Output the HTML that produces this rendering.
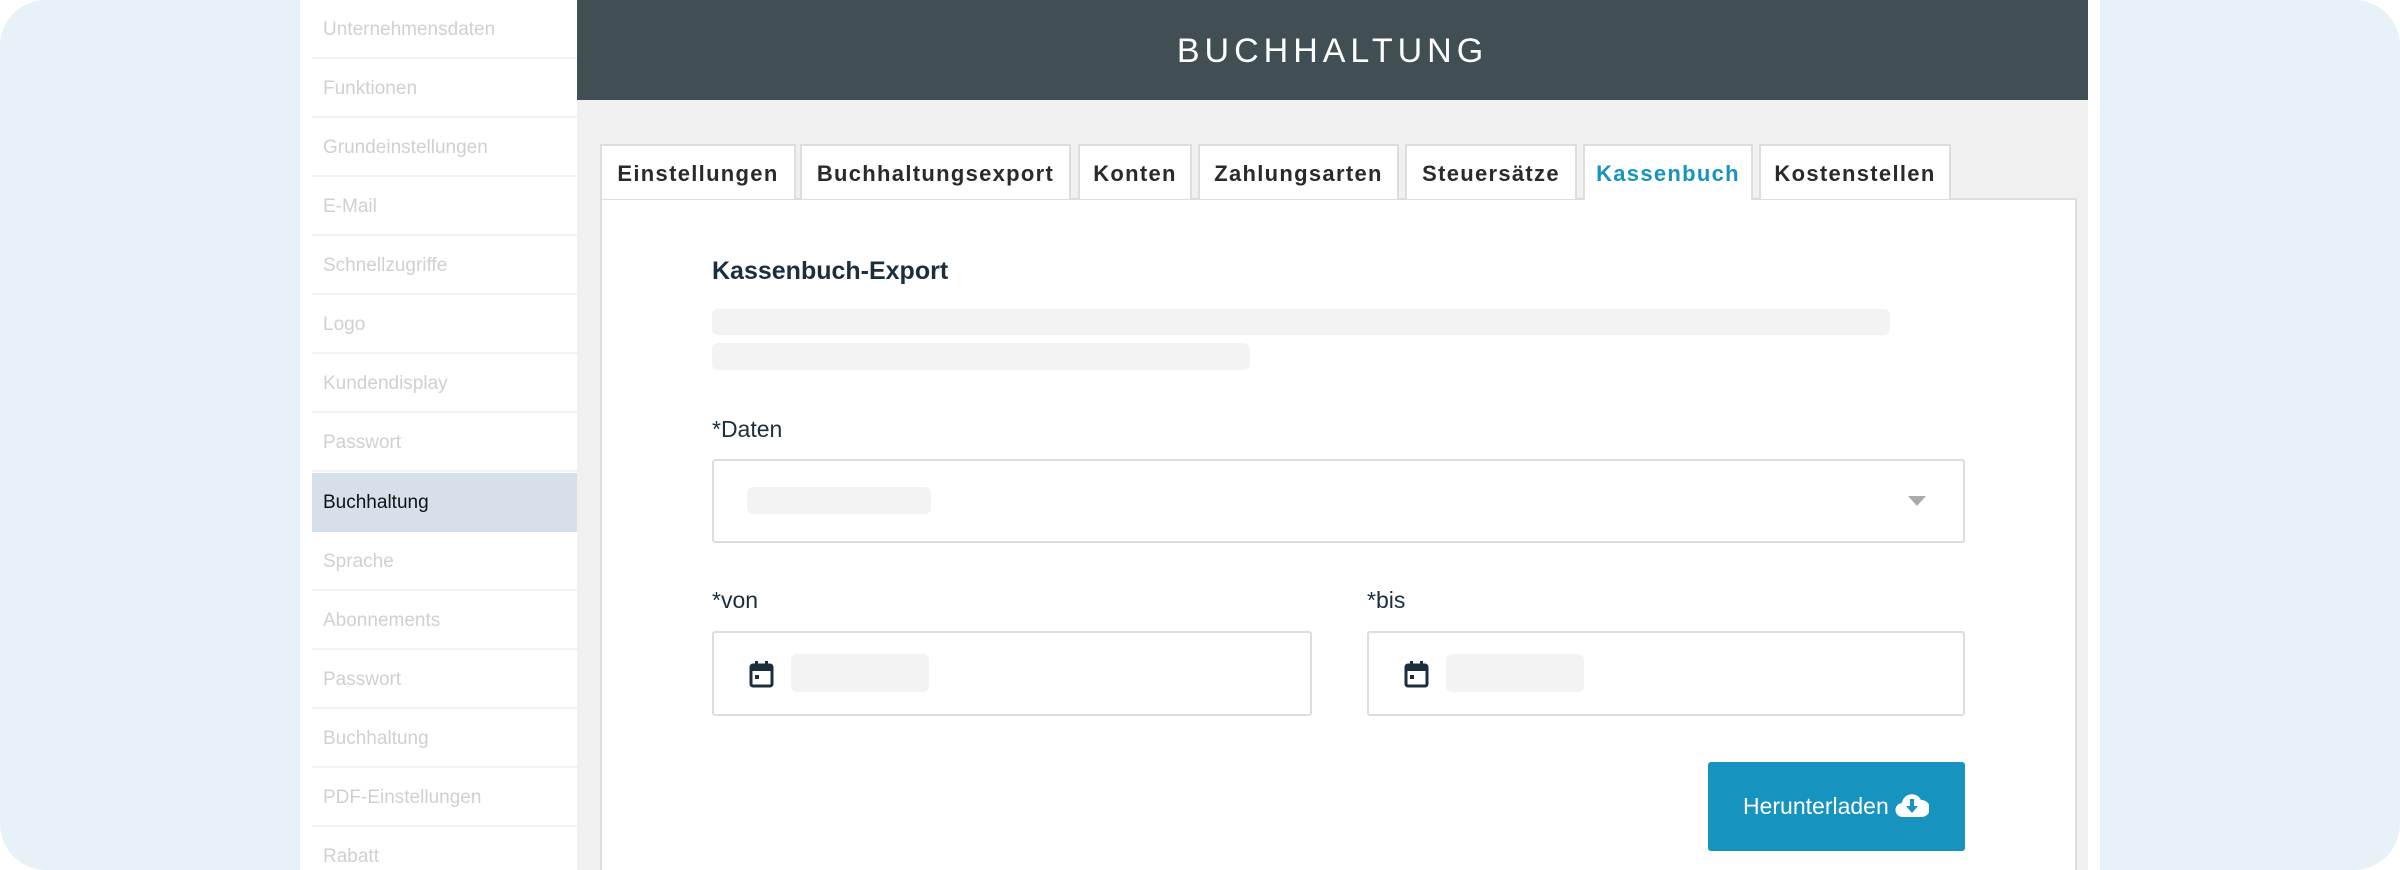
<!DOCTYPE html>
<html><head><meta charset="utf-8"><style>
*{margin:0;padding:0;box-sizing:border-box}
html,body{width:2400px;height:870px;overflow:hidden}
body{background:#fff;font-family:"Liberation Sans","DejaVu Sans",sans-serif;position:relative}
.bg{position:absolute;left:0;top:0;width:2400px;height:870px;background:#e6f2f8;border-radius:46px}
.card{position:absolute;left:300px;top:0;width:1800px;height:870px;background:#fff}
.side{position:absolute;left:312px;top:0;width:265px;height:870px;overflow:hidden}
.it{position:absolute;left:0;width:265px;height:59px;border-bottom:2px solid #f2f2f2;color:#d0d0d0;font-size:19px;line-height:59px;padding-left:11px}
.it.sel{background:#d6e0ea;color:#111;border-bottom-color:#d6e0ea}
.head{position:absolute;left:577px;top:0;width:1511px;height:100px;background:#414f55;color:#fff;font-size:34px;letter-spacing:5px;text-align:center;line-height:102px}
.gray{position:absolute;left:577px;top:100px;width:1511px;height:770px;background:#f0f0f0}
.tab{position:absolute;top:144px;height:55px;background:#fff;border:2px solid #ddd;border-bottom:none;font-weight:bold;font-size:22px;letter-spacing:1.3px;color:#2a2a2a;text-align:center;line-height:56px}
.panel{position:absolute;left:600px;top:198px;width:1477px;height:700px;background:#fff;border:2px solid #ddd}
.ph{position:absolute;background:#f3f3f3;border-radius:6px}
.lbl{position:absolute;font-size:23px;color:#1a2e3e}
.box{position:absolute;border:2px solid #ddd;border-radius:3px;background:#fff}
</style></head><body>
<div class="bg"></div>
<div class="card"></div>
<div class="side">
<div class="it" style="top:0">Unternehmensdaten</div>
<div class="it" style="top:59px">Funktionen</div>
<div class="it" style="top:118px">Grundeinstellungen</div>
<div class="it" style="top:177px">E-Mail</div>
<div class="it" style="top:236px">Schnellzugriffe</div>
<div class="it" style="top:295px">Logo</div>
<div class="it" style="top:354px">Kundendisplay</div>
<div class="it" style="top:413px">Passwort</div>
<div class="it sel" style="top:473px">Buchhaltung</div>
<div class="it" style="top:532px">Sprache</div>
<div class="it" style="top:591px">Abonnements</div>
<div class="it" style="top:650px">Passwort</div>
<div class="it" style="top:709px">Buchhaltung</div>
<div class="it" style="top:768px">PDF-Einstellungen</div>
<div class="it" style="top:827px">Rabatt</div>
</div>
<div class="head">BUCHHALTUNG</div>
<div class="gray"></div>
<div class="panel"></div>
<div class="tab" style="left:600px;width:196px">Einstellungen</div>
<div class="tab" style="left:800px;width:271px">Buchhaltungsexport</div>
<div class="tab" style="left:1078px;width:114px">Konten</div>
<div class="tab" style="left:1198px;width:201px">Zahlungsarten</div>
<div class="tab" style="left:1405px;width:172px">Steuersätze</div>
<div class="tab" style="left:1583px;width:170px;color:#1693bf;height:56px">Kassenbuch</div>
<div class="tab" style="left:1759px;width:192px">Kostenstellen</div>
<div class="lbl" style="left:712px;top:257px;font-size:25px;font-weight:bold">Kassenbuch-Export</div>
<div class="ph" style="left:712px;top:309px;width:1178px;height:26px"></div>
<div class="ph" style="left:712px;top:343px;width:538px;height:27px"></div>
<div class="lbl" style="left:712px;top:416px">*Daten</div>
<div class="box" style="left:712px;top:459px;width:1253px;height:84px"></div>
<div class="ph" style="left:747px;top:487px;width:184px;height:27px"></div>
<svg style="position:absolute;left:1908px;top:496px" width="20" height="12"><path d="M0 0h18L9 10z" fill="#aaa"/></svg>
<div class="lbl" style="left:712px;top:587px">*von</div>
<div class="lbl" style="left:1367px;top:587px">*bis</div>
<div class="box" style="left:712px;top:631px;width:600px;height:85px"></div>
<div class="box" style="left:1367px;top:631px;width:598px;height:85px"></div>
<svg style="position:absolute;left:748px;top:660px" width="27" height="28" viewBox="0 0 27 28"><rect x="3" y="5" width="21" height="21" rx="2" fill="none" stroke="#1a2e3e" stroke-width="3"/><rect x="3" y="5" width="21" height="6" fill="#1a2e3e"/><rect x="7" y="1" width="3" height="6" fill="#1a2e3e"/><rect x="17" y="1" width="3" height="6" fill="#1a2e3e"/><rect x="7" y="15" width="4" height="4" fill="#1a2e3e"/></svg>
<div class="ph" style="left:791px;top:654px;width:138px;height:38px"></div>
<svg style="position:absolute;left:1403px;top:660px" width="27" height="28" viewBox="0 0 27 28"><rect x="3" y="5" width="21" height="21" rx="2" fill="none" stroke="#1a2e3e" stroke-width="3"/><rect x="3" y="5" width="21" height="6" fill="#1a2e3e"/><rect x="7" y="1" width="3" height="6" fill="#1a2e3e"/><rect x="17" y="1" width="3" height="6" fill="#1a2e3e"/><rect x="7" y="15" width="4" height="4" fill="#1a2e3e"/></svg>
<div class="ph" style="left:1446px;top:654px;width:138px;height:38px"></div>
<div style="position:absolute;left:1708px;top:762px;width:257px;height:89px;background:#1693bf;border-radius:3px;color:#fff;font-size:23px;line-height:89px;padding-left:35px">Herunterladen
<svg style="position:absolute;left:187px;top:29px" width="34" height="28" viewBox="0 0 34 28"><path d="M8 26a7 7 0 0 1-1-14 10 10 0 0 1 19-3 8 8 0 0 1 1 17z" fill="#fff"/><path d="M15 8h4v7h4l-6 7-6-7h4z" fill="#1693bf"/></svg></div>
</body></html>
